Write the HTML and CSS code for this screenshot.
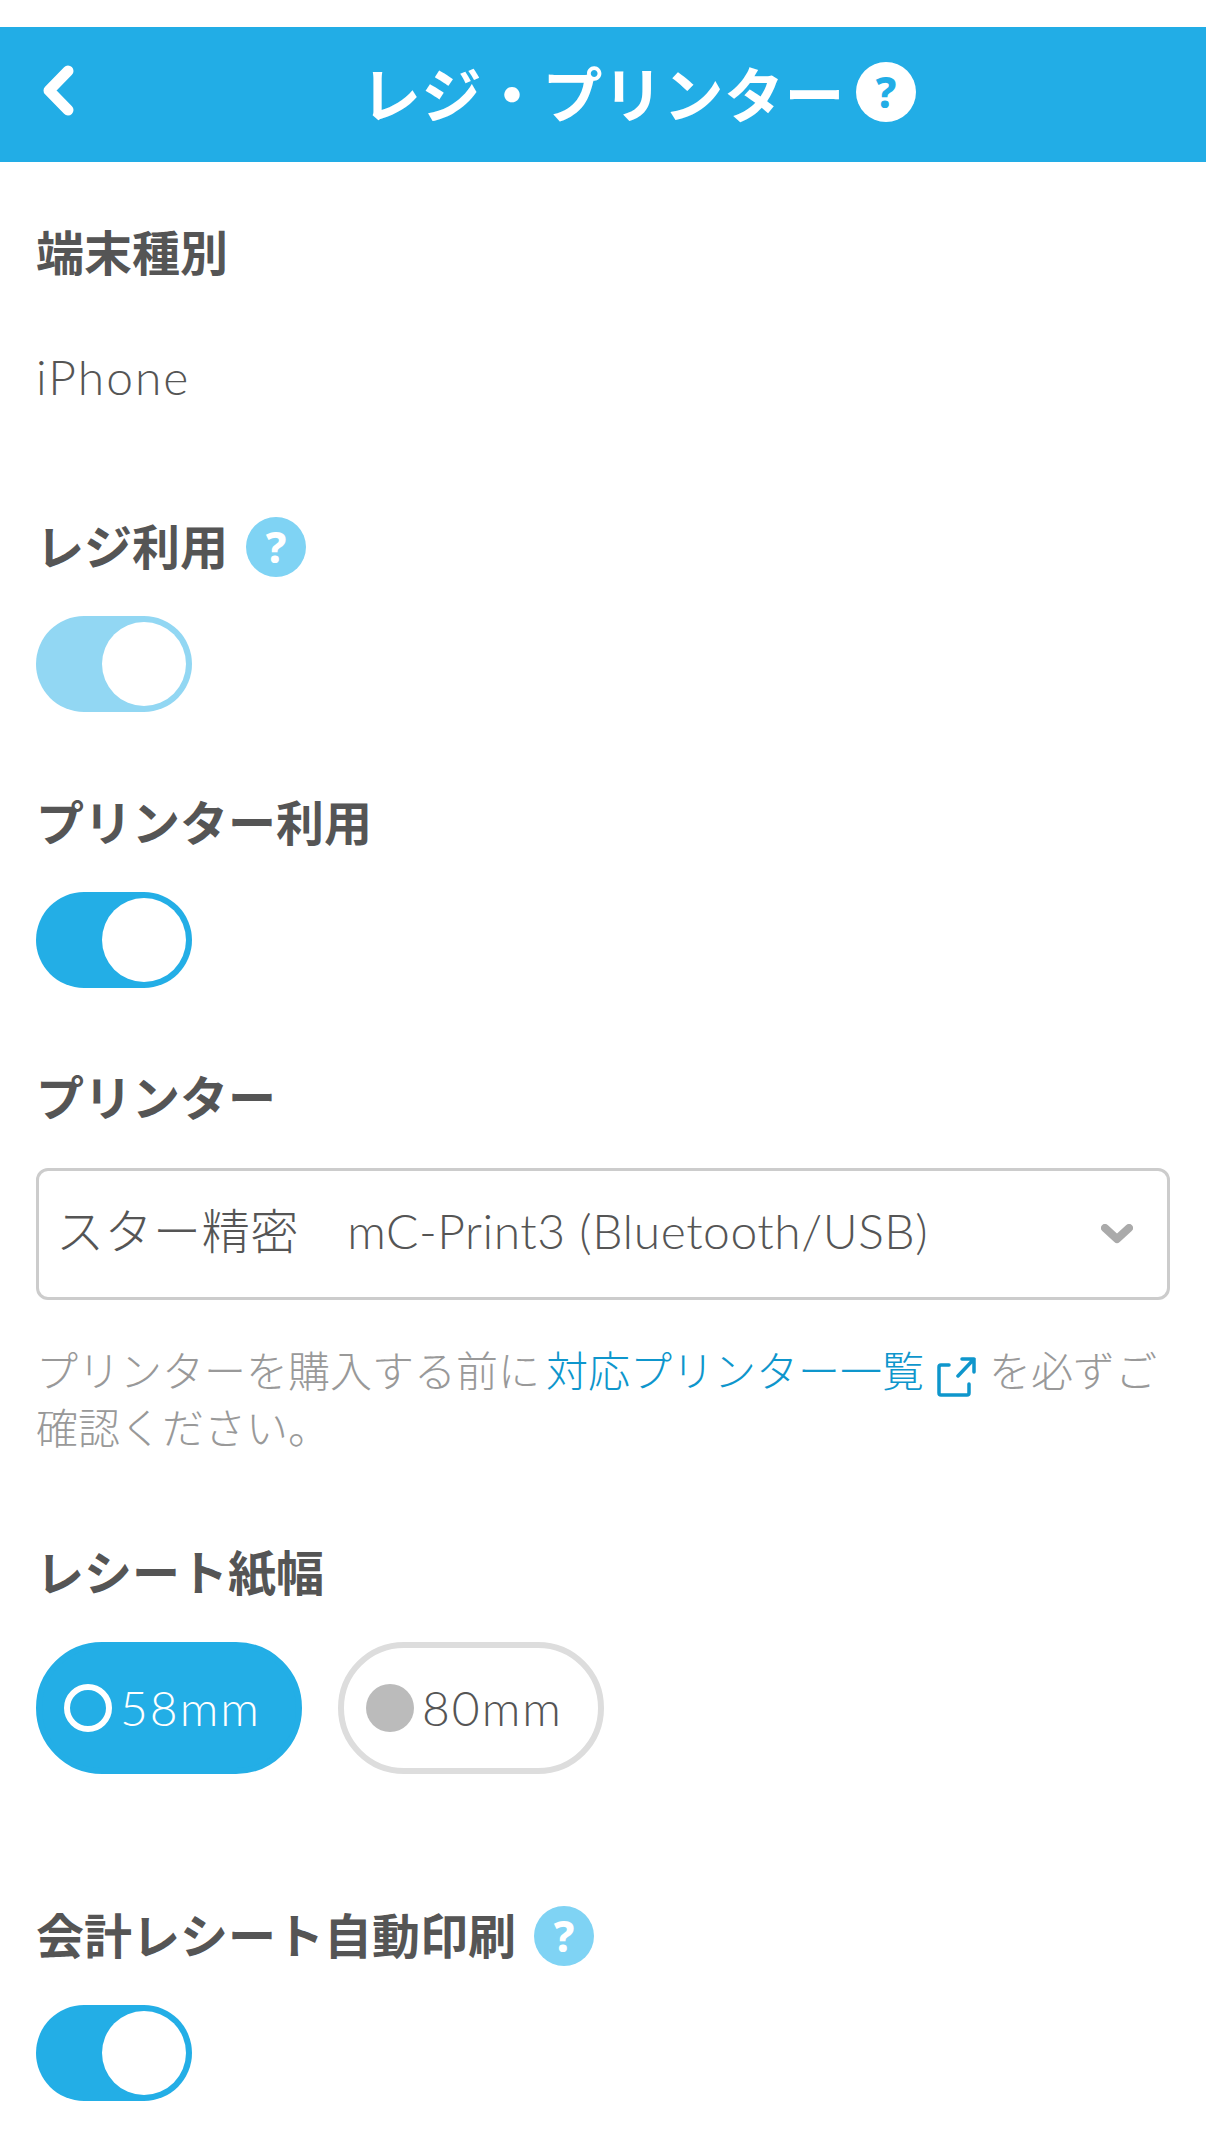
FILE: index.html
```html
<!DOCTYPE html>
<html lang="ja">
<head>
<meta charset="utf-8">
<title>レジ・プリンター</title>
<link rel="stylesheet" href="styles.css">
</head>
<body>
<header class="appbar">
  <svg class="back" viewBox="0 0 32 54" width="32" height="54"><path d="M25 6 6 25.5 25 45" /></svg>
  <h1 class="appbar-title">レジ・プリンター</h1>
  <span class="help help-white">?</span>
</header>
<main class="content">
  <section class="field field-kind">
    <div class="label">端末種別</div>
    <div class="value">iPhone</div>
  </section>
  <section class="field field-register">
    <div class="label">レジ利用<span class="help help-light">?</span></div>
    <div class="toggle toggle-light"><span class="knob"></span></div>
  </section>
  <section class="field field-printer-use">
    <div class="label">プリンター利用</div>
    <div class="toggle"><span class="knob"></span></div>
  </section>
  <section class="field field-printer">
    <div class="label">プリンター</div>
    <div class="select">
      <span class="select-text">スター精密　mC-Print3 (Bluetooth/USB)</span>
      <svg class="select-arrow" viewBox="0 0 32 20" width="32" height="20"><path d="M4 4 16 15 28 4" /></svg>
    </div>
    <p class="note">プリンターを購入する前に<a class="link">対応プリンター一覧<svg class="ext" viewBox="0 0 40 42" width="40" height="42"><path d="M13 9H5a2 2 0 0 0-2 2v26a2 2 0 0 0 2 2h26a2 2 0 0 0 2-2V28M26 3H38V16M38 3 22 20" /></svg></a>を必ずご確認ください。</p>
  </section>
  <section class="field field-paper">
    <div class="label">レシート紙幅</div>
    <div class="pills">
      <div class="pill pill-on"><span class="radio"></span><span class="pill-text">58mm</span></div>
      <div class="pill"><span class="radio"></span><span class="pill-text">80mm</span></div>
    </div>
  </section>
  <section class="field field-auto">
    <div class="label">会計レシート自動印刷<span class="help help-light">?</span></div>
    <div class="toggle"><span class="knob"></span></div>
  </section>
</main>
</body>
</html>
```
FILE: styles.css
```css
* { box-sizing: border-box; }
html, body { margin: 0; padding: 0; background: #fff; }
body {
  width: 1206px;
  height: 2149px;
  overflow: hidden;
  padding-top: 27px;
  color: #555;
  font-family: "Lato", "Noto Sans CJK JP", sans-serif;
  font-weight: 300;
  font-size: 48px;
}
.appbar {
  height: 135px;
  background: #22ade6;
  display: grid;
  grid-template-columns: 1fr auto 1fr;
  align-items: center;
  column-gap: 11px;
  padding-bottom: 5px;
  color: #fff;
}
.back {
  justify-self: start;
  margin-left: 43px;
  fill: none;
  stroke: #fff;
  stroke-width: 11;
  stroke-linecap: round;
  stroke-linejoin: round;
}
.appbar-title {
  margin: 0;
  font-size: 60px;
  line-height: 72px;
  font-weight: 700;
  letter-spacing: 0.5px;
  font-family: "Noto Sans CJK JP", sans-serif;
}
.help {
  display: inline-flex;
  align-items: center;
  justify-content: center;
  width: 60px;
  height: 60px;
  border-radius: 50%;
  font-family: "Noto Sans", sans-serif;
  font-size: 42px;
  line-height: 1;
  font-weight: 800;
}
.help-white { background: #fff; color: #22ade6; justify-self: start; }
.help-light { background: #7fd3f4; color: #fff; margin-left: 18px; }
.content { padding: 55px 36px 0; }
.field { display: flex; flex-direction: column; align-items: flex-start; gap: 33px; }
.field-register { margin-top: 98px; }
.field-printer-use { margin-top: 75px; }
.field-printer { margin-top: 74px; }
.field-paper { margin-top: 83px; }
.field-auto { margin-top: 126px; }
.field-kind { gap: 52px; }
.label {
  display: flex;
  align-items: center;
  height: 72px;
  padding-bottom: 6px;
  font-family: "Noto Sans CJK JP", sans-serif;
  font-weight: 700;
  font-size: 48px;
  line-height: 66px;
}
.label .help { margin-top: 6px; }
.value { line-height: 72px; height: 72px; letter-spacing: 2px; }
.toggle {
  width: 156px;
  height: 96px;
  border-radius: 48px;
  background: #23aee6;
  padding: 6px;
  display: flex;
  justify-content: flex-end;
}
.toggle-light { background: #92d7f3; }
.knob { width: 84px; height: 84px; border-radius: 50%; background: #fff; }
.select {
  width: 100%;
  height: 132px;
  margin-top: 1px;
  border: 3px solid #ccc;
  border-radius: 12px;
  display: flex;
  align-items: center;
  justify-content: space-between;
  padding: 0 34px 0 17px;
}
.select-text { line-height: 72px; margin-bottom: 6px; white-space: nowrap; letter-spacing: 0.55px; }
.select-arrow { fill: none; stroke: #aaa; stroke-width: 8; stroke-linecap: round; stroke-linejoin: round; }
.note {
  margin: 7px 0 0;
  font-size: 42px;
  line-height: 57px;
  color: #999;
  font-family: "Noto Sans CJK JP", sans-serif;
}
.link { color: #0e96cc; margin-left: 6px; }
.ext {
  vertical-align: -1px;
  margin: -10px 13px -10px 12px;
  fill: none;
  stroke: #0e96cc;
  stroke-width: 3.5;
  stroke-linecap: round;
  stroke-linejoin: round;
}
.pills { display: flex; gap: 36px; }
.pill {
  width: 266px;
  height: 132px;
  border-radius: 66px;
  border: 6px solid #ddd;
  display: flex;
  align-items: center;
  gap: 8px;
  padding-left: 22px;
  letter-spacing: 2px;
}
.pill-text { margin-bottom: 1px; }
.pill-on { background: #23aee6; border-color: #23aee6; color: #fff; }
.radio { width: 48px; height: 48px; border-radius: 50%; background: #bbb; }
.pill-on .radio { background: transparent; border: 6px solid #fff; }
```
